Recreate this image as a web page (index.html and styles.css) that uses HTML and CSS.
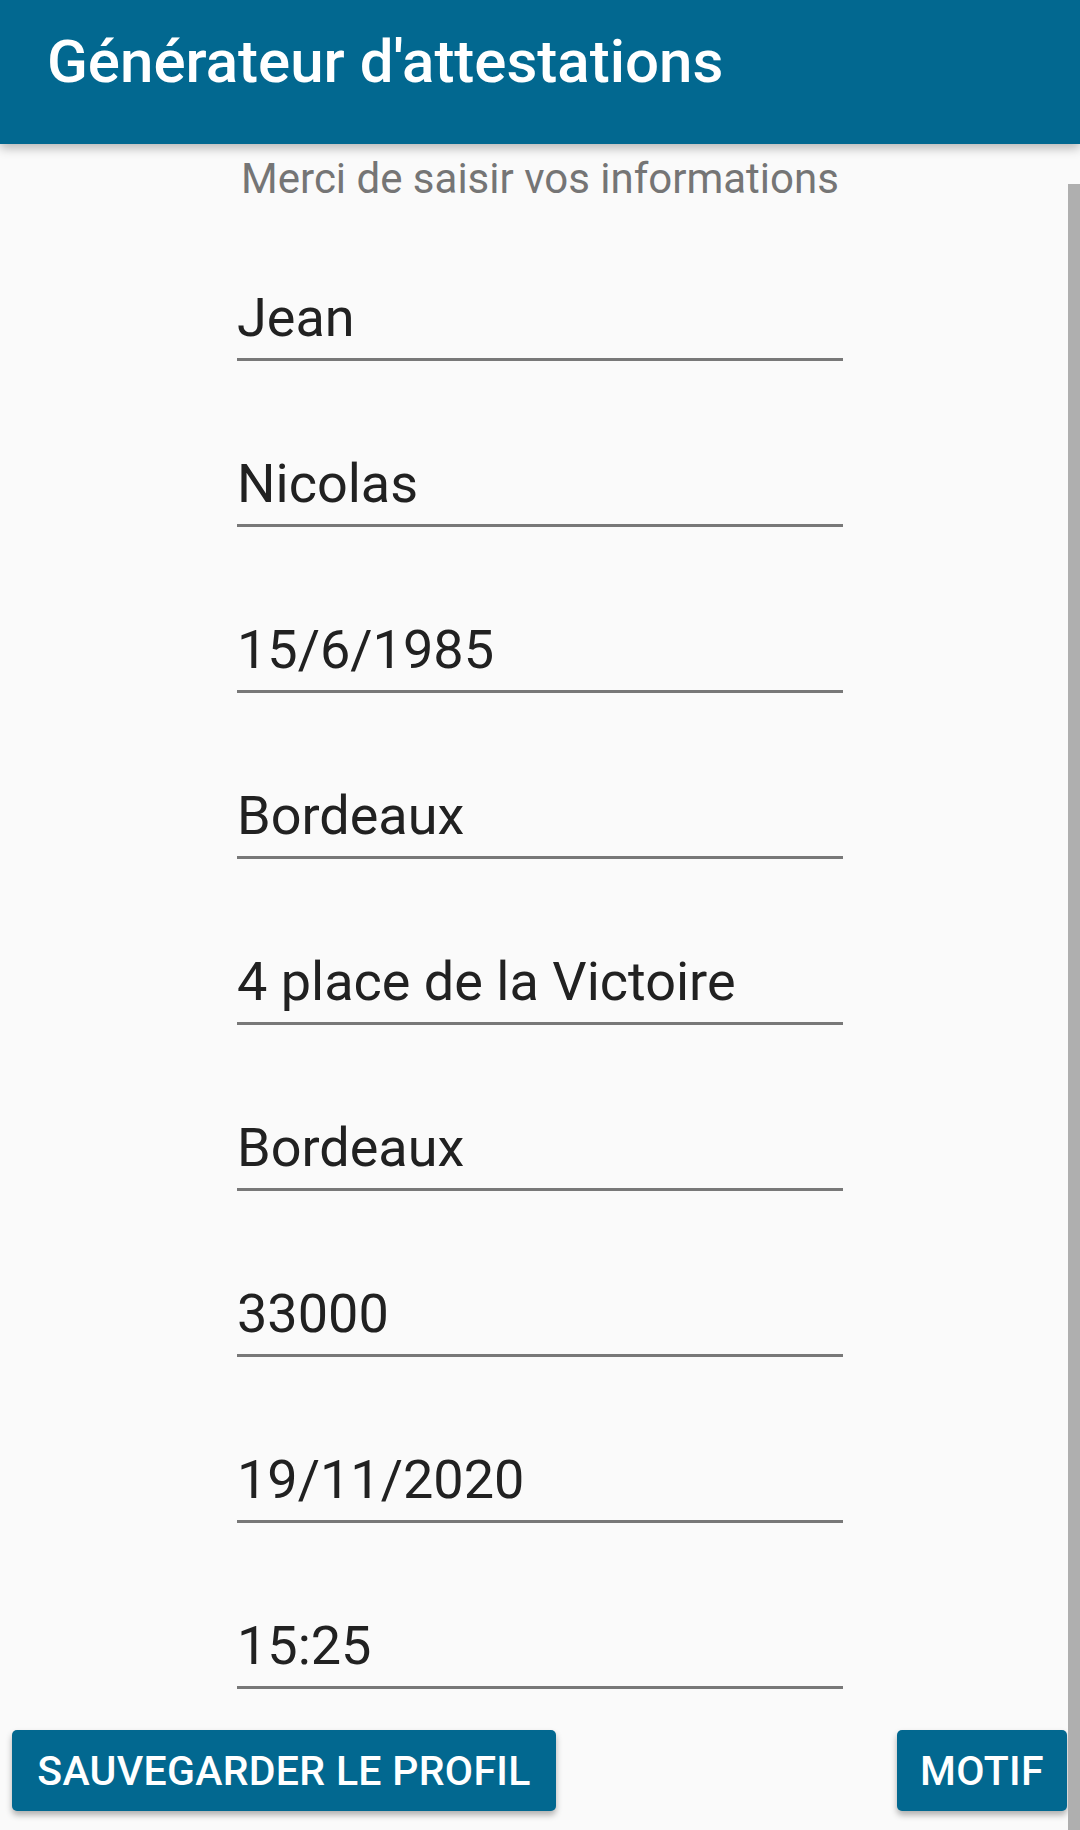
FILE: index.html
```html
<!DOCTYPE html>
<html lang="fr">
<head>
<meta charset="utf-8">
<title>Générateur d'attestations</title>
<link rel="stylesheet" href="styles.css">
</head>
<body>
<div class="app">
  <header class="appbar">
    <h1 class="appbar-title">Générateur d'attestations</h1>
  </header>
  <main class="content">
    <p class="subtitle">Merci de saisir vos informations</p>
    <div class="form">
      <div class="field">Jean</div>
      <div class="field">Nicolas</div>
      <div class="field">15/6/1985</div>
      <div class="field">Bordeaux</div>
      <div class="field">4 place de la Victoire</div>
      <div class="field">Bordeaux</div>
      <div class="field">33000</div>
      <div class="field">19/11/2020</div>
      <div class="field">15:25</div>
    </div>
    <div class="actions">
      <button class="btn btn-save">SAUVEGARDER LE PROFIL</button>
      <button class="btn btn-motif">MOTIF</button>
    </div>
    <div class="scrollbar"></div>
  </main>
</div>
</body>
</html>
```
FILE: styles.css
```css
* { box-sizing: border-box; }
html, body {
  margin: 0;
  padding: 0;
  width: 1080px;
  height: 1830px;
  overflow: hidden;
  background: #fafafa;
  font-family: Roboto, "Noto Sans", "Liberation Sans", sans-serif;
}
.app {
  display: flex;
  flex-direction: column;
  height: 1830px;
}
.appbar {
  height: 144px;
  background: #026890;
  display: flex;
  align-items: flex-start;
  padding: 0 0 0 47px;
  box-shadow: 0 4px 10px rgba(0, 0, 0, 0.28);
  position: relative;
  z-index: 2;
  flex: none;
}
.appbar-title {
  margin: 0;
  padding-top: 27px;
  color: #ffffff;
  font-weight: 500;
  font-size: 60px;
  line-height: 70px;
  letter-spacing: 0;
}
.content {
  position: relative;
  flex: 1;
  display: flex;
  flex-direction: column;
  align-items: center;
}
.subtitle {
  margin: 11px 0 0;
  font-size: 42px;
  line-height: 48px;
  color: #757575;
}
.form {
  width: 606px;
  display: flex;
  flex-direction: column;
}
.field {
  padding-top: 83px;
  padding-bottom: 8px;
  margin-bottom: 8px;
  border-bottom: 3px solid #787878;
  font-size: 54px;
  line-height: 64px;
  color: #212121;
  white-space: nowrap;
}
.actions {
  width: 100%;
  display: flex;
  justify-content: space-between;
  padding: 0 13px 0 12px;
  margin-top: 33px;
}
.btn {
  height: 81px;
  border: none;
  border-radius: 5px;
  background: #026890;
  color: #ffffff;
  font-family: Roboto, "Noto Sans", "Liberation Sans", sans-serif;
  font-weight: 500;
  font-size: 41px;
  letter-spacing: 0.3px;
  box-shadow: 0 4px 6px rgba(0, 0, 0, 0.3);
  padding: 0;
}
.btn-save { width: 544px; }
.btn-motif { width: 170px; }
.scrollbar {
  position: absolute;
  right: 0;
  top: 40px;
  bottom: 0;
  width: 12px;
  background: #afafaf;
}
```
